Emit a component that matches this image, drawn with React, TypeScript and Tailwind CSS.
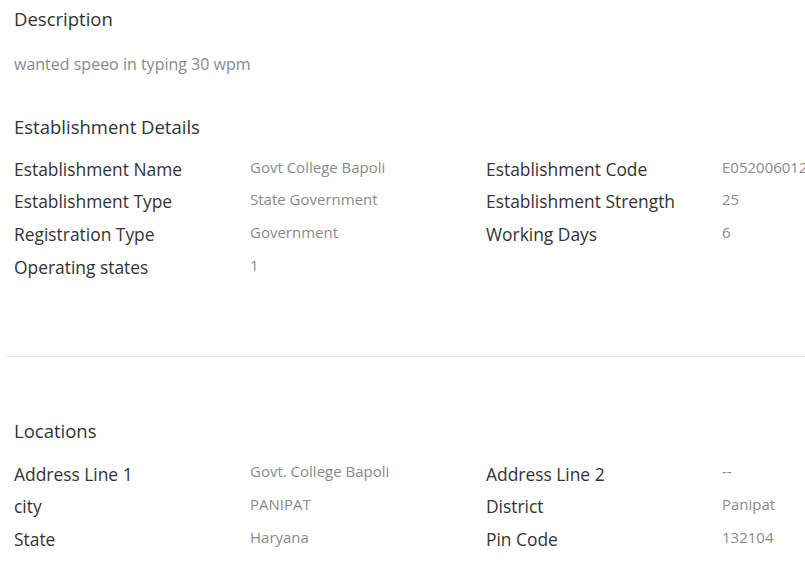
import React from "react";

const font = { fontFamily: '"Open Sans", "Noto Sans", sans-serif' };

type Pair = [string, string];

function Row({ a, b }: { a: Pair; b?: Pair }) {
  return (
    <div className="flex h-[32.7px] items-center">
      <div className="w-[236px] shrink-0 text-[17.4px] text-[#333333]">{a[0]}</div>
      <div className="w-[236px] shrink-0 -mt-[4px] text-[15px] text-[#8a8a8a]">{a[1]}</div>
      {b && (
        <>
          <div className="w-[236px] shrink-0 text-[17.4px] text-[#333333]">{b[0]}</div>
          <div className="w-[236px] shrink-0 -mt-[4px] text-[15px] text-[#8a8a8a]">{b[1]}</div>
        </>
      )}
    </div>
  );
}

export default function App() {
  return (
    <div className="w-[805px] h-[570px] overflow-hidden bg-white" style={font}>
      <div className="pl-[14px] w-[1000px]">
        <div className="pt-[5px] text-[18.5px] leading-[27px] text-[#333333]">Description</div>
        <div className="mt-[20px] text-[16px] leading-[24px] text-[#8a8a8a]">wanted speeo in typing 30 wpm</div>
        <div className="mt-[36.5px] text-[18.5px] leading-[27px] text-[#333333]">Establishment Details</div>
        <div className="mt-[13px]">
          <Row a={["Establishment Name", "Govt College Bapoli"]} b={["Establishment Code", "E052006012"]} />
          <Row a={["Establishment Type", "State Government"]} b={["Establishment Strength", "25"]} />
          <Row a={["Registration Type", "Government"]} b={["Working Days", "6"]} />
          <Row a={["Operating states", "1"]} />
        </div>
      </div>
      <div className="ml-[7px] mt-[72.5px] h-px bg-[#e2e2e2]" />
      <div className="pl-[14px] w-[1000px]">
        <div className="mt-[60.5px] text-[18.5px] leading-[27px] text-[#333333]">Locations</div>
        <div className="mt-[13px]">
          <Row a={["Address Line 1", "Govt. College Bapoli"]} b={["Address Line 2", "--"]} />
          <Row a={["city", "PANIPAT"]} b={["District", "Panipat"]} />
          <Row a={["State", "Haryana"]} b={["Pin Code", "132104"]} />
        </div>
      </div>
    </div>
  );
}
